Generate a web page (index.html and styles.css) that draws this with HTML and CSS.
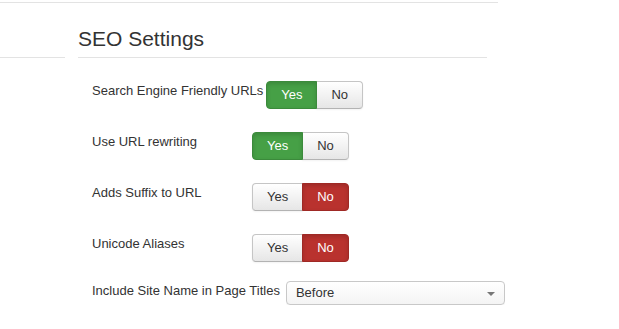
FILE: index.html
```html
<!DOCTYPE html>
<html lang="en">
<head>
    <meta charset="UTF-8">
    <title>SEO Settings</title>
    <link rel="stylesheet" href="styles.css">
</head>
<body>
    <div class="topbar"></div>

    <div class="layout">
        <div class="sidebar"></div>

        <div class="main">
            <h2 class="legend">SEO Settings</h2>

            <div class="control-group">
                <label class="control-label">Search Engine Friendly URLs</label>
                <div class="btn-group">
                    <span class="btn btn-success">Yes</span>
                    <span class="btn">No</span>
                </div>
            </div>

            <div class="control-group">
                <label class="control-label">Use URL rewriting</label>
                <div class="btn-group">
                    <span class="btn btn-success">Yes</span>
                    <span class="btn">No</span>
                </div>
            </div>

            <div class="control-group">
                <label class="control-label">Adds Suffix to URL</label>
                <div class="btn-group">
                    <span class="btn">Yes</span>
                    <span class="btn btn-danger">No</span>
                </div>
            </div>

            <div class="control-group">
                <label class="control-label">Unicode Aliases</label>
                <div class="btn-group">
                    <span class="btn">Yes</span>
                    <span class="btn btn-danger">No</span>
                </div>
            </div>

            <div class="control-group select-group">
                <label class="control-label">Include Site Name in Page Titles</label>
                <div class="select-box">
                    <span class="select-value">Before</span>
                    <span class="caret"></span>
                </div>
            </div>
        </div>
    </div>
</body>
</html>
```

FILE: styles.css
```css
body {
    margin: 0;
    font-family: "Liberation Sans", Arial, sans-serif;
    font-size: 13px;
    color: #333;
    background: #fff;
}

.topbar {
    width: 498px;
    height: 2px;
    border-bottom: 1px solid #e3e3e3;
}

.layout {
    display: flex;
    gap: 13px;
}

.sidebar {
    width: 65px;
    height: 54px;
    border-bottom: 1px solid #e3e3e3;
}

.main {
    width: 409px;
}

.legend {
    margin: 18px 0 0;
    font-size: 21px;
    font-weight: normal;
    line-height: 36px;
    color: #333;
    border-bottom: 1px solid #e3e3e3;
}

.control-group {
    display: flex;
    align-items: flex-start;
    margin: 23px 0 0 14px;
    white-space: nowrap;
}

.select-group {
    margin-top: 19px;
}

.control-label {
    flex-shrink: 0;
    min-width: 160px;
    padding: 1px 3px 0 0;
    line-height: 18px;
    box-sizing: border-box;
}

.btn-group {
    display: flex;
    flex-shrink: 0;
}

.btn {
    display: inline-block;
    padding: 4px 14px;
    line-height: 18px;
    font-size: 13px;
    color: #333;
    text-align: center;
    background: linear-gradient(#ffffff, #e6e6e6);
    border: 1px solid #c5c5c5;
    border-bottom-color: #b3b3b3;
    box-shadow: inset 0 1px 0 rgba(255,255,255,0.2), 0 1px 2px rgba(0,0,0,0.05);
}

.btn:first-child {
    border-radius: 4px 0 0 4px;
}

.btn:last-child {
    border-radius: 0 4px 4px 0;
    margin-left: -1px;
}

.btn-success {
    color: #fff;
    background: #46a046;
    border-color: #3b8a3b;
    box-shadow: inset 0 2px 4px rgba(0,0,0,0.15);
    position: relative;
}

.btn-danger {
    color: #fff;
    background: #b9322e;
    border-color: #9f2925;
    box-shadow: inset 0 2px 4px rgba(0,0,0,0.15);
    position: relative;
}

.select-box {
    position: relative;
    flex-shrink: 0;
    width: 219px;
    height: 24px;
    margin-left: 3px;
    box-sizing: border-box;
    padding: 0 9px;
    line-height: 22px;
    border: 1px solid #c8c8c8;
    border-radius: 4px;
    background: linear-gradient(#ffffff, #f4f4f4);
    box-shadow: 0 1px 0 rgba(0,0,0,0.04);
}

.caret {
    position: absolute;
    right: 9px;
    top: 10px;
    width: 0;
    height: 0;
    border-left: 4px solid transparent;
    border-right: 4px solid transparent;
    border-top: 4px solid #777;
}
```
